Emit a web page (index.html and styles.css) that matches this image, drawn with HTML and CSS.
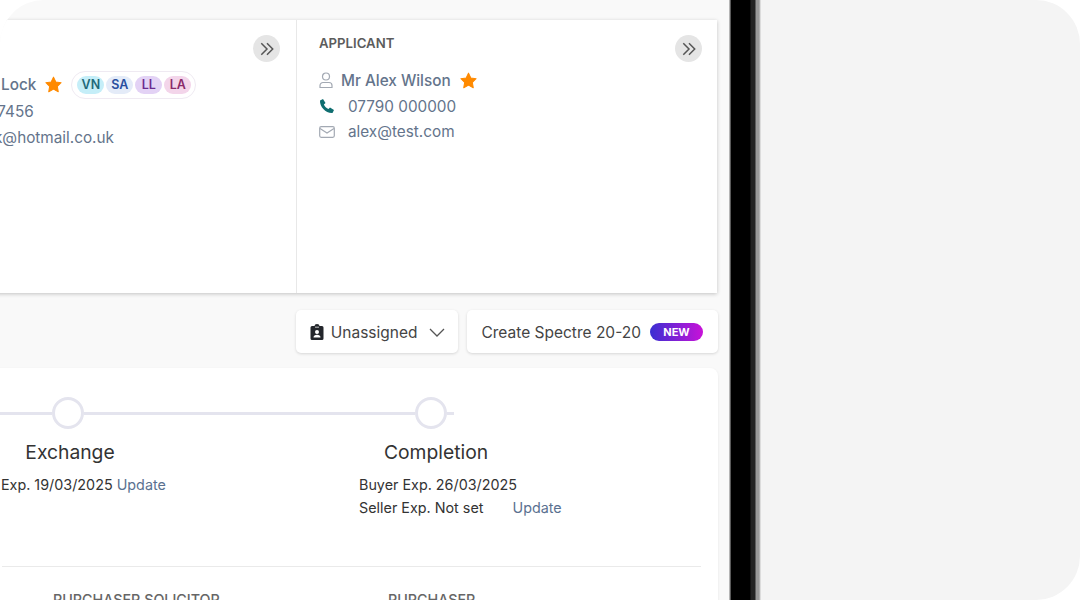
FILE: index.html
```html
<!DOCTYPE html>
<html lang="en">

<head>
    <meta charset="UTF-8">
    <title>Sale progression</title>
    <link rel="stylesheet" href="styles.css">
</head>

<body>
    <div class="desk">
        <div class="screen">
            <div class="screen_inner">
                <div class="people_card">
                    <div class="person person_left">
                        <div class="person_head">
                            <span class="person_label">VENDOR</span>
                            <span class="more_btn">
                                <svg width="16" height="16" viewBox="0 0 14 14"><path d="M2 2l5 5-5 5M7 2l5 5-5 5" /></svg>
                            </span>
                        </div>
                        <div class="person_rows person_rows_left">
                            <div class="row row_name">
                                <svg class="row_icon" width="14" height="17" viewBox="0 0 14 17"><circle cx="7" cy="4.500" r="3.500" /><path d="M1 15.500v-2a3 3 0 0 1 3-3h6a3 3 0 0 1 3 3v2z" /></svg>
                                <span class="name_text">Mr Damian Lock</span>
                                <svg class="star" width="19" height="19" viewBox="0 0 18 18"><path d="M9 2l2.200 4.600 5 .7-3.600 3.500.9 5L9 13.400l-4.500 2.400.9-5L1.800 7.300l5-.7z" /></svg>
                                <div class="chips">
                                    <span class="chip chip_vn">VN</span>
                                    <span class="chip chip_sa">SA</span>
                                    <span class="chip chip_ll">LL</span>
                                    <span class="chip chip_la">LA</span>
                                </div>
                            </div>
                            <div class="row row_contact">
                                <span class="row_icon_space"></span>
                                <span>07700 987456</span>
                            </div>
                            <div class="row row_contact">
                                <span class="row_icon_space"></span>
                                <span>adam.lock@hotmail.co.uk</span>
                            </div>
                        </div>
                    </div>
                    <div class="person person_right">
                        <div class="person_head">
                            <span class="person_label">APPLICANT</span>
                            <span class="more_btn">
                                <svg width="16" height="16" viewBox="0 0 14 14"><path d="M2 2l5 5-5 5M7 2l5 5-5 5" /></svg>
                            </span>
                        </div>
                        <div class="person_rows">
                            <div class="row row_name">
                                <svg class="row_icon" width="14" height="17" viewBox="0 0 14 17"><circle cx="7" cy="4.500" r="3.500" /><path d="M1 15.500v-2a3 3 0 0 1 3-3h6a3 3 0 0 1 3 3v2z" /></svg>
                                <span class="name_text">Mr Alex Wilson</span>
                                <svg class="star" width="19" height="19" viewBox="0 0 18 18"><path d="M9 2l2.200 4.600 5 .7-3.600 3.500.9 5L9 13.400l-4.500 2.400.9-5L1.800 7.300l5-.7z" /></svg>
                            </div>
                            <div class="row row_contact">
                                <span class="row_icon_space">
                                    <svg class="phone_icon" width="16" height="16" viewBox="0 0 16 16"><path d="M1 2.500L4 1l2.500 4-1.600 1.500c.8 2 2.600 3.800 4.600 4.600L11 9.500l4 2.500-1.500 3C7 15.500.5 9 1 2.500z" /></svg>
                                </span>
                                <span>07790 000000</span>
                            </div>
                            <div class="row row_contact">
                                <span class="row_icon_space">
                                    <svg class="row_icon" width="16" height="12" viewBox="0 0 16 12"><rect x=".7" y=".7" width="14.600" height="10.600" rx="1.500" /><path d="M1 2.500l7 4.500 7-4.500" /></svg>
                                </span>
                                <span>alex@test.com</span>
                            </div>
                        </div>
                    </div>
                </div>

                <div class="actions">
                    <div class="action_btn action_assign">
                        <svg class="clip_icon" width="14" height="16" viewBox="0 0 14 16"><path fill-rule="evenodd" d="M2 2h2.500a2.500 2 0 0 1 5 0H12a1.500 1.500 0 0 1 1.500 1.500v11A1.500 1.500 0 0 1 12 16H2A1.500 1.500 0 0 1 .5 14.500v-11A1.500 1.500 0 0 1 2 2zm3 1.500h4V2.800H5zM7 6a2 2 0 1 0 0 4 2 2 0 0 0 0-4zM3.500 13.500h7c0-1.700-1.500-2.700-3.500-2.700s-3.500 1-3.500 2.700z" /></svg>
                        <span>Unassigned</span>
                        <svg class="chevron" width="16" height="9" viewBox="0 0 16 9"><path d="M1 1l7 7 7-7" /></svg>
                    </div>
                    <div class="action_btn">
                        <span>Create Spectre 20-20</span>
                        <span class="new_pill">NEW</span>
                    </div>
                </div>

                <div class="progress_card">
                    <div class="timeline">
                        <span class="line line_a"></span>
                        <span class="dot"></span>
                        <span class="line line_b"></span>
                        <span class="dot"></span>
                        <span class="line line_c"></span>
                    </div>
                    <div class="stages">
                        <div class="stage stage_exchange">
                            <h3>Exchange</h3>
                            <p class="stage_date">Buy Exp. 19/03/2025 <a>Update</a></p>
                        </div>
                        <div class="stage stage_completion">
                            <h3>Completion</h3>
                            <p>Buyer Exp. 26/03/2025</p>
                            <p>Seller Exp. Not set <a class="update_gap">Update</a></p>
                        </div>
                    </div>
                    <div class="divider"></div>
                    <div class="parties">
                        <span class="party party_solicitor">PURCHASER SOLICITOR</span>
                        <span class="party">PURCHASER</span>
                    </div>
                </div>
            </div>
        </div>
        <div class="bezel"></div>
        <div class="side_panel"></div>
    </div>
</body>

</html>
```

FILE: styles.css
```css
* {
    margin: 0;
    padding: 0;
    box-sizing: border-box;
}

html,
body {
    width: 100%;
    height: 100%;
    overflow: hidden;
    background-color: #fff;
    font-family: Inter, "Liberation Sans", sans-serif;
}

.desk {
    display: flex;
    width: 1080px;
    height: 600px;
}

.screen {
    width: 729px;
    height: 600px;
    flex: none;
    overflow: hidden;
    background-color: #f9f9f9;
    border-top-left-radius: 44px;
}

.screen_inner {
    margin-left: -400px;
    width: 1118px;
    padding-top: 20px;
}

.bezel {
    width: 32px;
    flex: none;
    background: linear-gradient(to right, #b5b5b5 0, #b5b5b5 1px, #000 2px, #000 21px, #222 22px, #222 26px, #999 27px, #999 30px, #c4c4c4 31px, #f4f4f4 32px);
}

.side_panel {
    flex: 1;
    background-color: #f4f4f4;
    border-top-right-radius: 44px;
    border-bottom-right-radius: 44px;
}

/* people */
.people_card {
    display: flex;
    height: 273px;
    margin-right: 1px;
    background-color: #fff;
    box-shadow: 0 1px 4px rgba(0, 0, 0, .22);
}

.person {
    padding-top: 15px;
}

.person_left {
    width: 697px;
    padding-left: 299px;
    padding-right: 16px;
    border-right: 1px solid #e8e8e8;
}

.person_right {
    flex: 1;
    padding-left: 22px;
    padding-right: 15px;
}

.person_head {
    display: flex;
    justify-content: space-between;
    align-items: flex-start;
}

.person_label {
    font-size: 13.2px;
    line-height: 17px;
    font-weight: 600;
    color: #5c5c5c;
}

.more_btn {
    display: flex;
    align-items: center;
    justify-content: center;
    width: 27px;
    height: 27px;
    border-radius: 50%;
    background-color: #e5e5e5;
}

.more_btn path {
    fill: none;
    stroke: #555;
    stroke-width: 1.3;
}

.person_rows {
    margin-top: 6px;
}

.person_rows_left {
    margin-top: 8px;
}

.person_rows_left .row_name {
    height: 29px;
    margin-left: -3px;
}

.row {
    display: flex;
    align-items: center;
    height: 25.5px;
    font-size: 15.3px;
    color: #64748b;
    white-space: nowrap;
}

.row_name .row_icon {
    width: 14px;
    margin-right: 8px;
}

.name_text {
    font-weight: 500;
}

.row_icon {
    flex: none;
    fill: none;
    stroke: #a3a9b3;
    stroke-width: 1.2;
}

.row_icon_space {
    display: flex;
    align-items: center;
    flex: none;
    width: 29px;
}

.phone_icon {
    fill: #0f6e70;
}

.star {
    flex: none;
    margin-left: 8px;
    fill: #ff8a00;
    stroke: #ff8a00;
    stroke-width: 1;
    stroke-linejoin: round;
}

.chips {
    display: flex;
    gap: 2px;
    height: 28px;
    align-items: center;
    margin-left: 8px;
    padding: 0 4px 0 5px;
    border: 1.5px solid #efeaf2;
    border-radius: 14px;
}

.chip {
    display: flex;
    align-items: center;
    justify-content: center;
    width: 27px;
    height: 18px;
    border-radius: 9px;
    font-size: 12.5px;
    font-weight: 600;
}

.chip_vn {
    background-color: #c5eef8;
    color: #1f6a7a;
}

.chip_sa {
    background-color: #e4ebf8;
    color: #2a4f9f;
}

.chip_ll {
    background-color: #e3d2f5;
    color: #6b2a90;
}

.chip_la {
    background-color: #f3d5ea;
    color: #8a2a6a;
}

/* buttons above the progress card */
.actions {
    display: flex;
    justify-content: flex-end;
    gap: 9px;
    margin-top: 17px;
}

.action_btn {
    display: flex;
    align-items: center;
    height: 43px;
    padding: 1px 15px 0 14px;
    background-color: #fff;
    border-radius: 5px;
    box-shadow: 0 1px 3px rgba(0, 0, 0, .14);
    font-size: 15.5px;
    color: #444;
    white-space: nowrap;
}

.action_assign {
    padding: 1px 13px 0 14px;
}

.clip_icon {
    flex: none;
    margin-right: 7px;
    fill: #23262b;
}

.chevron {
    flex: none;
    margin-left: 12px;
    fill: none;
    stroke: #555;
    stroke-width: 1.3;
}

.new_pill {
    width: 53px;
    height: 18px;
    margin-left: 9px;
    border-radius: 9px;
    background: linear-gradient(to right, #3a2fd2, #c812d8);
    color: #fff;
    font-size: 11px;
    font-weight: 700;
    line-height: 18px;
    text-align: center;
}

/* progress */
.progress_card {
    height: 300px;
    margin-top: 15px;
    padding-top: 29px;
    background-color: #fff;
    border-radius: 8px;
    box-shadow: 0 1px 3px rgba(0, 0, 0, .08);
}

.timeline {
    display: flex;
    align-items: center;
}

.line {
    height: 3px;
    flex: none;
    background-color: #e4e4ee;
}

.line_a {
    width: 452px;
}

.line_b {
    width: 331px;
}

.line_c {
    width: 7px;
}

.dot {
    width: 32px;
    height: 32px;
    flex: none;
    border: 3px solid #e4e4ee;
    border-radius: 50%;
}

.stages {
    display: flex;
    margin-top: 11px;
    font-size: 14.35px;
    line-height: 23px;
    color: #333;
    white-space: nowrap;
}

.stage h3 {
    margin-bottom: 9px;
    font-size: 19.3px;
    line-height: 24px;
    font-weight: 400;
    color: #333;
    text-align: center;
}

.stage a {
    color: #5a7190;
}

.stage_exchange {
    width: 190px;
    margin-left: 375px;
}

.stage_date {
    margin-left: -4px;
}

.stage_completion {
    width: 154px;
    margin-left: 194px;
}

.update_gap {
    margin-left: 25px;
}

.divider {
    height: 1px;
    margin: 47px 17px 0 402px;
    background-color: #eaeaea;
}

.parties {
    display: flex;
    margin-top: 25px;
    padding-left: 453px;
    font-size: 14.3px;
    line-height: 16px;
    font-weight: 500;
    color: #666;
}

.party_solicitor {
    width: 335px;
}
```
